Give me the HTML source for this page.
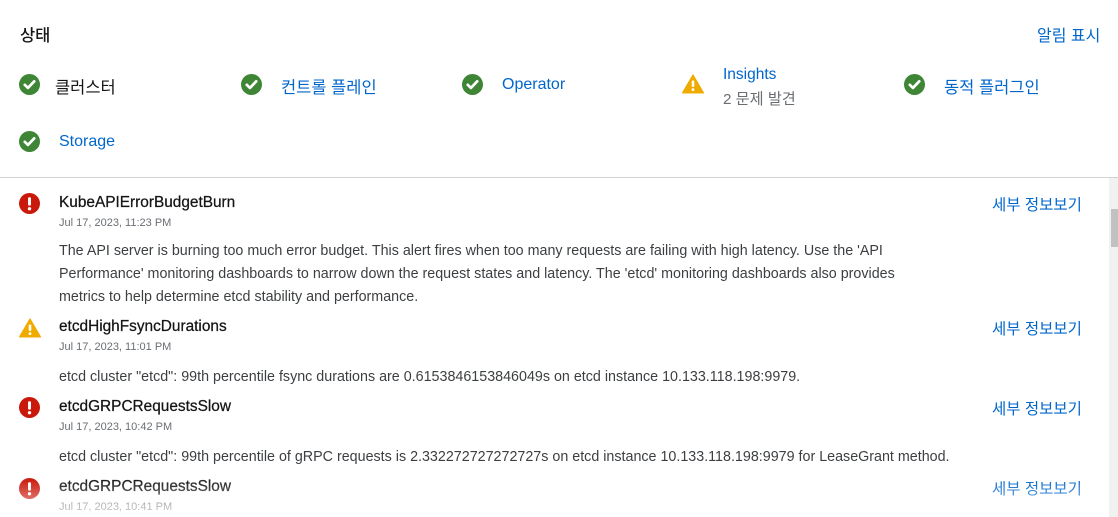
<!DOCTYPE html>
<html><head><meta charset="utf-8"><style>
*{margin:0;padding:0;box-sizing:border-box}
body{width:1118px;height:517px;overflow:hidden;background:#fff;font-family:"Liberation Sans","Noto Sans CJK KR",sans-serif;color:#151515;position:relative}
.a{position:absolute;white-space:nowrap}
.link{color:#0066cc}
.ic{position:absolute;width:21px;height:21px}
.t{font-size:15.4px;color:#151515;-webkit-text-stroke:0.25px #151515}
.ts{font-size:11px;color:#6a6e73}
.d{font-size:14.3px;color:#3c3f42;line-height:23px}
.k{font-size:16.5px}
.dl{font-size:15.5px}
</style></head><body>
<svg width="0" height="0" style="position:absolute"><defs>
<symbol id="ok" viewBox="0 0 20 20"><circle cx="10" cy="10" r="10" fill="#3e8635"/><path d="M5.5 10.3l3 3 6-6.3" stroke="#fff" stroke-width="2.6" fill="none" stroke-linecap="round" stroke-linejoin="round"/></symbol>
<symbol id="err" viewBox="0 0 20 20"><circle cx="10" cy="10" r="10" fill="#c9190b"/><rect x="8.6" y="4" width="2.8" height="8" rx="1.2" fill="#fff"/><circle cx="10" cy="15" r="1.6" fill="#fff"/></symbol>
<symbol id="warn" viewBox="0 0 22 20"><path d="M11 1.2 L21.2 18.8 H0.8 Z" fill="#f0ab00" stroke="#f0ab00" stroke-width="1.5" stroke-linejoin="round"/><rect x="9.7" y="6.5" width="2.6" height="6.5" rx="1" fill="#fff"/><circle cx="11" cy="15.6" r="1.4" fill="#fff"/></symbol>
</defs></svg>

<div class="a" style="left:20px;top:22px;font-size:16.5px;font-weight:500">상태</div>
<div class="a link" style="left:1037px;top:22px;font-size:16px">알림 표시</div>

<svg class="ic" style="left:19px;top:74px"><use href="#ok"/></svg>
<div class="a k" style="left:55px;top:74px">클러스터</div>
<svg class="ic" style="left:241px;top:74px"><use href="#ok"/></svg>
<div class="a link k" style="left:281px;top:74px">컨트롤 플레인</div>
<svg class="ic" style="left:462px;top:74px"><use href="#ok"/></svg>
<div class="a link" style="left:502px;top:76px;font-size:16px">Operator</div>
<svg class="ic" style="left:682px;top:74px;width:22px;height:20px"><use href="#warn"/></svg>
<div class="a link" style="left:723px;top:66px;font-size:15.5px">Insights</div>
<div class="a" style="left:723px;top:87px;font-size:15.2px;color:#6a6e73">2 문제 발견</div>
<svg class="ic" style="left:904px;top:74px"><use href="#ok"/></svg>
<div class="a link k" style="left:944px;top:74px">동적 플러그인</div>
<svg class="ic" style="left:19px;top:131px"><use href="#ok"/></svg>
<div class="a link" style="left:59px;top:133px;font-size:16px">Storage</div>

<div class="a" style="left:0;top:177px;width:1118px;height:1px;background:#d2d2d2"></div>
<div class="a" style="left:0;top:178px;width:1118px;height:339px;overflow:hidden">
  <div class="a d" style="left:59px;top:-17px">클러스터 이름을 볼때까지 나를 동의합니다 있습니다</div>
  <svg class="ic" style="left:19px;top:15px"><use href="#err"/></svg>
  <div class="a t" style="left:59px;top:16px">KubeAPIErrorBudgetBurn</div>
  <div class="a ts" style="left:59px;top:39px">Jul 17, 2023, 11:23 PM</div>
  <div class="a d" style="left:59px;top:62px;white-space:normal;width:865px">The API server is burning too much error budget. This alert fires when too many requests are failing with high latency. Use the 'API Performance' monitoring dashboards to narrow down the request states and latency. The 'etcd' monitoring dashboards also provides metrics to help determine etcd stability and performance.</div>
  <div class="a link dl" style="left:992px;top:15px">세부 정보보기</div>

  <svg class="ic" style="left:19px;top:140px;width:22px;height:20px"><use href="#warn"/></svg>
  <div class="a t" style="left:59px;top:140px">etcdHighFsyncDurations</div>
  <div class="a ts" style="left:59px;top:163px">Jul 17, 2023, 11:01 PM</div>
  <div class="a d" style="left:59px;top:188px">etcd cluster "etcd": 99th percentile fsync durations are 0.6153846153846049s on etcd instance 10.133.118.198:9979.</div>
  <div class="a link dl" style="left:992px;top:139px">세부 정보보기</div>

  <svg class="ic" style="left:19px;top:219px"><use href="#err"/></svg>
  <div class="a t" style="left:59px;top:220px">etcdGRPCRequestsSlow</div>
  <div class="a ts" style="left:59px;top:243px">Jul 17, 2023, 10:42 PM</div>
  <div class="a d" style="left:59px;top:268px">etcd cluster "etcd": 99th percentile of gRPC requests is 2.332272727272727s on etcd instance 10.133.118.198:9979 for LeaseGrant method.</div>
  <div class="a link dl" style="left:992px;top:219px">세부 정보보기</div>

  <svg class="ic" style="left:19px;top:300px"><use href="#err"/></svg>
  <div class="a t" style="left:59px;top:300px">etcdGRPCRequestsSlow</div>
  <div class="a ts" style="left:59px;top:323px">Jul 17, 2023, 10:41 PM</div>
  <div class="a link dl" style="left:992px;top:299px">세부 정보보기</div>
  <div class="a" style="left:0;top:300px;width:1110px;height:39px;background:linear-gradient(rgba(255,255,255,0),rgba(255,255,255,0.7))"></div>

  <div class="a" style="left:1109px;top:0;width:9px;height:339px;background:#f1f1f1"></div>
  <div class="a" style="left:1111px;top:31px;width:7px;height:38px;background:#c1c1c1"></div>
</div>
</body></html>
